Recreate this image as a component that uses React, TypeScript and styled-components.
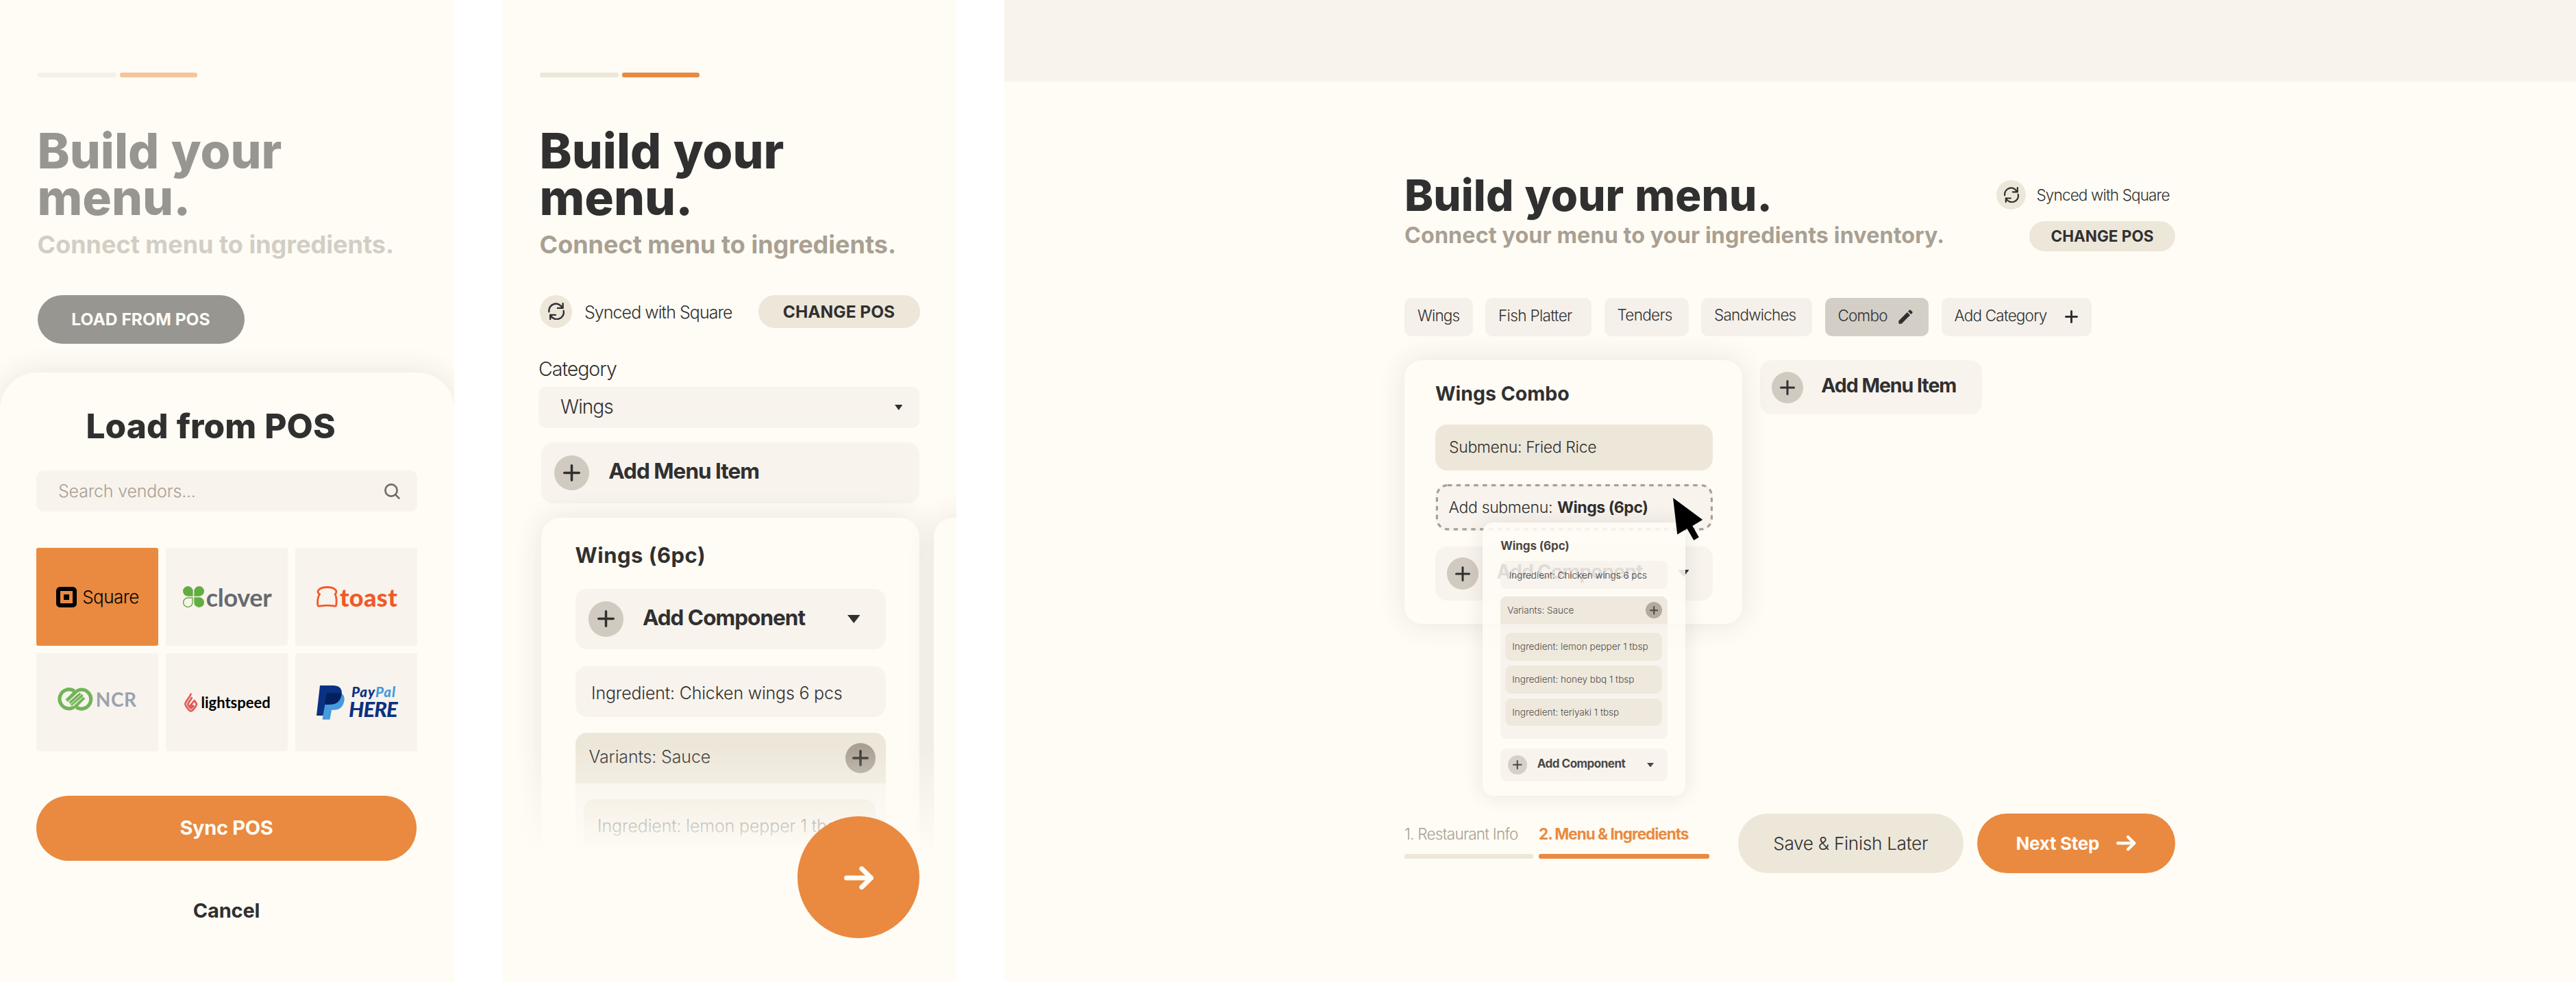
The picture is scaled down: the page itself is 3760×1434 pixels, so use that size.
import React from 'react';
import styled, { createGlobalStyle } from 'styled-components';

const c = {
  page: '#fffcf5',
  ink: '#303030',
  muted: '#a9a093',
  faint: '#f8f3ed',
  sand: '#ede7da',
  stone: '#d1cac0',
  orange: '#e98a40',
};

const Global = createGlobalStyle`
  *, *::before, *::after { box-sizing: border-box; }
  body { margin: 0; background: #fff; }
  #root { font-family: Inter, "Liberation Sans", sans-serif; color: ${c.ink}; }
  svg { display: block; flex: none; }
`;

/* ---------- primitives ---------- */

const Text = styled.span<{ $size: number; $w?: number; $ls?: number; $color?: string; $lh?: number; $up?: number }>`
  display: block;
  flex: none;
  white-space: nowrap;
  font-size: ${p => p.$size}px;
  font-weight: ${p => p.$w ?? 300};
  letter-spacing: ${p => p.$ls ?? 0}px;
  color: ${p => p.$color ?? c.ink};
  line-height: ${p => (p.$lh ? `${p.$lh}px` : '1.2')};
  margin-bottom: ${p => (p.$up ?? 0) * 2}px;
`;

const Board = styled.div`
  width: 3760px;
  height: 1434px;
  display: grid;
  grid-template-columns: 662.5px 662.5px 1fr;
  column-gap: 70.5px;
  overflow: hidden;
`;

const Phone = styled.section`
  position: relative;
  height: 1434px;
  background: ${c.page};
  overflow: hidden;
  display: flex;
  flex-direction: column;
  padding-top: 106px;
`;

const Intro = styled.header`
  padding-left: 54.5px;
`;

const Bars = styled.div`
  display: flex;
  gap: 5.5px;
`;

const Bar = styled.i<{ $w: number; $bg: string }>`
  display: block;
  width: ${p => p.$w}px;
  height: 7px;
  border-radius: 3px;
  background: ${p => p.$bg};
`;

const PhoneTitle = styled.h1<{ $color: string }>`
  margin: 73px 0 0;
  font-size: 71px;
  line-height: 68px;
  font-weight: 800;
  letter-spacing: 0;
  word-spacing: 2px;
  color: ${p => p.$color};
`;

const PhoneSub = styled.p<{ $color: string }>`
  margin: 15px 0 0;
  font-size: 36px;
  line-height: 40px;
  font-weight: 700;
  white-space: nowrap;
  color: ${p => p.$color};
`;

const Pill = styled.button<{ $w: number; $h: number; $bg: string; $gap?: number; $mt?: number; $ml?: number }>`
  display: flex;
  align-items: center;
  justify-content: center;
  flex: none;
  gap: ${p => p.$gap ?? 0}px;
  width: ${p => p.$w}px;
  height: ${p => p.$h}px;
  margin: ${p => p.$mt ?? 0}px 0 0 ${p => p.$ml ?? 0}px;
  padding: 0;
  border: 0;
  border-radius: ${p => p.$h / 2}px;
  background: ${p => p.$bg};
  font-family: inherit;
`;

const Disc = styled.span<{ $d: number; $bg?: string }>`
  display: flex;
  align-items: center;
  justify-content: center;
  flex: none;
  width: ${p => p.$d}px;
  height: ${p => p.$d}px;
  border-radius: 50%;
  background: ${p => p.$bg ?? c.stone};
`;

/* ---------- icons ---------- */

const Plus = ({ size, stroke }: { size: number; stroke: number }) => (
  <svg width={size} height={size} viewBox={`0 0 ${size} ${size}`} stroke={c.ink} strokeWidth={stroke} strokeLinecap="round">
    <path d={`M${size / 2} ${stroke / 2}V${size - stroke / 2}M${stroke / 2} ${size / 2}H${size - stroke / 2}`} />
  </svg>
);

const Caret = ({ w, h }: { w: number; h: number }) => (
  <svg width={w} height={h} viewBox="0 0 10 8" preserveAspectRatio="none" fill={c.ink}>
    <path d="M0 0H10L5 8Z" />
  </svg>
);

const Refresh = ({ size }: { size: number }) => (
  <svg width={size} height={size} viewBox="0 0 24 24" fill="none" stroke={c.ink} strokeWidth="2.3" strokeLinecap="round" strokeLinejoin="round">
    <path d="M2.3 12.7A9.7 9.7 0 0 1 20.8 7.4M21.7 1.2V7.6H14.4M22.7 11.4A9.7 9.7 0 0 1 4.2 17M4 23V17.2H11.4" />
  </svg>
);

const Arrow = ({ w, h, stroke }: { w: number; h: number; stroke: number }) => {
  const s = stroke / 2;
  return (
    <svg width={w} height={h} viewBox={`0 0 ${w} ${h}`} fill="none" stroke={c.page} strokeWidth={stroke} strokeLinecap="round" strokeLinejoin="round">
      <path d={`M${s} ${h / 2}H${w - s}M${w * 0.6} ${s}L${w - s} ${h / 2}L${w * 0.6} ${h - s}`} />
    </svg>
  );
};

const SearchIcon = () => (
  <svg width="23" height="23" viewBox="0 0 23 23" fill="none" stroke="#6f6a5d" strokeWidth="2.6" strokeLinecap="round">
    <circle cx="10" cy="10" r="8.6" />
    <path d="M16.4 16.6L21.5 21.6" />
  </svg>
);

const Pencil = () => (
  <svg width="27" height="27" viewBox="0 0 24 24" fill={c.ink}>
    <path d="M3 17.25V21h3.75L17.81 9.94l-3.75-3.75L3 17.25zM20.71 7.04a1 1 0 0 0 0-1.41l-2.34-2.34a1 1 0 0 0-1.41 0l-1.83 1.83 3.75 3.75 1.83-1.83z" />
  </svg>
);

const Pointer = styled.svg`
  position: absolute;
  left: 392px;
  top: 201.5px;
`;

/* ---------- vendor logos ---------- */

const SquareMark = () => (
  <svg width="30" height="30" viewBox="0 0 30 30">
    <rect x="3" y="3" width="24" height="24" rx="2.6" fill="none" stroke="#000" strokeWidth="6" />
    <rect x="11" y="11" width="8" height="8" rx=".6" />
  </svg>
);

const CloverMark = () => (
  <svg width="31" height="31" viewBox="0 0 31 31" fill="#62ad42">
    <path d="M14.7 14.7H7.3A7.35 7.35 0 1 1 14.7 7.3Z" />
    <path d="M16.3 14.7H23.7A7.35 7.35 0 1 0 16.3 7.3Z" />
    <path d="M16.3 16.3H23.7A7.35 7.35 0 1 1 16.3 23.7Z" />
    <path d="M14 17H7.3A6.7 6.7 0 1 0 14 23.7Z" fill="none" stroke="#62ad42" strokeWidth="1.4" />
  </svg>
);

const ToastMark = () => (
  <svg width="31" height="31" viewBox="0 0 31 31" fill="none" stroke="#f05a28" strokeWidth="2.8" strokeLinejoin="round">
    <path d="M4.6 11.4C1.6 10 1.3 7.6 3.2 5.4C5.8 2.5 10 1.5 15.5 1.5S25.2 2.5 27.8 5.4C29.5 7.6 29.2 10 27.2 11.3C29 15.5 29.6 22 28.6 28C28.3 29.4 27.3 29.3 25.5 28.9C19 27.9 12 27.9 5.8 28.9C3.5 29.4 2 29.3 1.8 27.5C1.2 21.5 2 15.5 4.6 11.4Z" />
  </svg>
);

const NcrMark = () => (
  <svg width="52" height="34" viewBox="0 0 52 34" fill="none" stroke="#71b458">
    <path strokeWidth="5.2" d="M24.5 5A14 14 0 1 0 16.7 30.8C21 30.8 24 29 27 26L38.5 14.5" />
    <path strokeWidth="5.2" d="M27.5 29A14 14 0 1 0 35.2 3C31 3 28 4.8 25 7.8L13.4 19.3" />
    <path strokeWidth="3.6" d="M17.5 22.5L33.5 8.5M19.5 25.5L36.5 10.5" />
    <path stroke="#f8f3ed" strokeWidth="1" d="M15.5 20.5L31.5 6.5M19 24.3L35 9.7M22.5 27.5L39.5 12" />
  </svg>
);

const LightspeedMark = () => (
  <svg width="19.5" height="29" viewBox="0 0 19.5 29" fill="none" stroke="#e05a58" strokeWidth="2.7" strokeLinejoin="round">
    <path d="M9.7 1.5C9.5 6 1.5 13 1.4 17C1.4 19 6.5 26.8 9.7 27.4C13 26.8 18 19 18 17L14.7 12L8.6 19.6L9.7 21.5L12.5 18.3" />
    <path d="M11.2 7C10 11 5.3 15 5.3 17.3C5.3 18.5 8 22.8 9.7 23.4C11 23 12.5 21.2 14 19" />
  </svg>
);

const PayPalMark = () => (
  <svg width="41" height="50" viewBox="0 0 41 50">
    <path fill="#459bdb" d="M36 11C40 14 41.3 18 40.5 22C39 31 34 35.8 25 35.8H22L19.5 49.8H8.7L11.5 27H20Z" />
    <path fill="#0a3182" d="M5 0H24C33 0 37.5 4.5 36.8 11.5L20 27.7H12.3L9.5 44H0Z" />
    <path fill="#04205f" d="M14.7 11.2H36.8C36 22 30 27.7 20 27.7H12Z" />
  </svg>
);

const Brand = styled.span<{ $size: number; $w: number; $color: string; $ls?: number; $italic?: boolean; $inter?: boolean; $ml?: number }>`
  display: block;
  white-space: nowrap;
  font-family: ${p => (p.$inter ? 'Inter' : 'Lato')}, "Open Sans", sans-serif;
  font-size: ${p => p.$size}px;
  font-weight: ${p => p.$w};
  font-style: ${p => (p.$italic ? 'italic' : 'normal')};
  letter-spacing: ${p => p.$ls ?? 0}px;
  line-height: 1;
  color: ${p => p.$color};
  margin-left: ${p => p.$ml ?? 0}px;
`;

const Sky = styled.span`
  color: #459bdb;
`;

const Tiles = styled.div`
  display: grid;
  grid-template-columns: repeat(3, 178px);
  grid-auto-rows: 143px;
  gap: 11px;
  margin-top: 53px;
`;

const Tile = styled.div<{ $pad: number; $gap: number; $active?: boolean; $lift?: number }>`
  display: flex;
  align-items: center;
  gap: ${p => p.$gap}px;
  padding-left: ${p => p.$pad}px;
  padding-bottom: ${p => p.$lift ?? 0}px;
  border-radius: 3px;
  background: ${p => (p.$active ? c.orange : c.faint)};
`;

const PayPalWords = styled.div`
  display: flex;
  flex-direction: column;
`;

/* ---------- phone: vendor sheet ---------- */

const Sheet = styled.div`
  flex: 1;
  margin-top: 42px;
  padding: 48px 53px 0;
  border-radius: 54px 54px 0 0;
  background: ${c.page};
  box-shadow: 0 0 42px rgba(60, 50, 40, 0.11);
`;

const SheetTitle = styled.h2`
  margin: 0;
  padding-left: 72.5px;
  font-size: 49.5px;
  line-height: 60px;
  font-weight: 800;
  letter-spacing: 0.1px;
  word-spacing: 1px;
  white-space: nowrap;
`;

const Field = styled.div<{ $mt: number }>`
  display: flex;
  align-items: center;
  justify-content: space-between;
  height: 60px;
  width: 556px;
  margin-top: ${p => p.$mt}px;
  padding: 0 25px 0 32px;
  border-radius: 10px;
  background: ${c.faint};
`;

const SheetActions = styled.div`
  display: flex;
  flex-direction: column;
  align-items: center;
  width: 555px;
  margin-top: 65px;
  gap: 52.5px;
`;

const VendorPhone = () => (
  <Phone>
    <Intro>
      <Bars>
        <Bar $w={115} $bg="#f5f0e9" />
        <Bar $w={113} $bg="#f5c49c" />
      </Bars>
      <PhoneTitle $color="#979690">Build your<br />menu.</PhoneTitle>
      <PhoneSub $color="#d3cec5">Connect menu to ingredients.</PhoneSub>
      <Pill $w={302} $h={71} $bg="#979690" $mt={54}>
        <Text $size={24.6} $w={700} $color={c.page}>LOAD FROM POS</Text>
      </Pill>
    </Intro>
    <Sheet>
      <SheetTitle>Load from POS</SheetTitle>
      <Field $mt={35}>
        <Text $size={25} $ls={-0.2} $color={c.muted}>Search vendors...</Text>
        <SearchIcon />
      </Field>
      <Tiles>
        <Tile $active $pad={28.7} $gap={8.5}>
          <SquareMark />
          <Brand $inter $size={26} $w={300} $ls={-0.5} $color="#000">Square</Brand>
        </Tile>
        <Tile $pad={24.7} $gap={3}>
          <CloverMark />
          <Brand $size={36} $w={700} $ls={-0.3} $color="#666a70">clover</Brand>
        </Tile>
        <Tile $pad={30.5} $gap={3.5}>
          <ToastMark />
          <Brand $size={36} $w={900} $ls={0.4} $color="#f05a28">toast</Brand>
        </Tile>
        <Tile $pad={31.3} $gap={3.5} $lift={9}>
          <NcrMark />
          <Brand $size={28} $w={700} $ls={0.6} $color="#98a3ae">NCR</Brand>
        </Tile>
        <Tile $pad={27} $gap={5}>
          <LightspeedMark />
          <Brand $size={22} $w={700} $color="#000">lightspeed</Brand>
        </Tile>
        <Tile $pad={31} $gap={6}>
          <PayPalMark />
          <PayPalWords>
            <Brand $size={20.5} $w={900} $italic $ls={0.9} $ml={4} $color="#0a3182">Pay<Sky>Pal</Sky></Brand>
            <Brand $size={31} $w={900} $italic $ls={-0.9} $color="#0a3182">HERE</Brand>
          </PayPalWords>
        </Tile>
      </Tiles>
      <SheetActions>
        <Pill $w={555} $h={95} $bg={c.orange}>
          <Text $size={29} $w={700} $ls={-0.3} $color={c.page}>Sync POS</Text>
        </Pill>
        <Text $size={29} $w={700} $ls={-0.2} $lh={40}>Cancel</Text>
      </SheetActions>
    </Sheet>
  </Phone>
);

/* ---------- menu cards ---------- */

const AddRow = styled.div<{ $h: number; $w?: number; $pad: number; $end?: number; $gap: number; $r?: number; $mt?: number; $ml?: number }>`
  display: flex;
  align-items: center;
  gap: ${p => p.$gap}px;
  flex: none;
  height: ${p => p.$h}px;
  width: ${p => (p.$w ? `${p.$w}px` : 'auto')};
  margin: ${p => p.$mt ?? 0}px 0 0 ${p => p.$ml ?? 0}px;
  padding: 0 ${p => p.$end ?? p.$pad}px 0 ${p => p.$pad}px;
  border-radius: ${p => p.$r ?? 17}px;
  background: ${c.faint};

  > svg { margin-left: auto; }
`;

const Line = styled.div<{ $h: number; $pad: number; $end?: number; $r: number; $bg?: string; $mt?: number }>`
  display: flex;
  align-items: center;
  justify-content: space-between;
  height: ${p => p.$h}px;
  margin-top: ${p => p.$mt ?? 0}px;
  padding: 0 ${p => p.$end ?? p.$pad}px 0 ${p => p.$pad}px;
  border-radius: ${p => p.$r}px;
  background: ${p => p.$bg ?? c.faint};
`;

const Group = styled.div<{ $r: number; $mt: number }>`
  margin-top: ${p => p.$mt}px;
  border-radius: ${p => p.$r}px;
  overflow: hidden;
  background: ${c.faint};
`;

/* ---------- phone: menu builder ---------- */

const SyncRow = styled.div`
  display: flex;
  align-items: center;
  height: 47.5px;
  width: 555px;
  margin-top: 54px;
  gap: 18px;

  > button { margin-left: auto; }
`;

const Builder = styled.div`
  display: flex;
  flex-direction: column;
  padding: 0 53.5px 0 53px;
  margin-top: 45px;
`;

const Carousel = styled.div`
  display: flex;
  gap: 21px;
  margin: 21.4px 0 0 56.6px;
  height: 678px;
`;

const PhoneCard = styled.article`
  flex: none;
  width: 552.4px;
  height: 800px;
  padding: 35.5px 48.5px 0 50px;
  border-radius: 28px;
  background: ${c.page};
  box-shadow: 0 0 42px rgba(60, 50, 40, 0.11);
  display: flex;
  flex-direction: column;
`;

const VariantBody = styled.div`
  padding: 23px 15.5px 40px 12px;
  display: flex;
  flex-direction: column;
  gap: 23px;
`;

const Fade = styled.div`
  position: absolute;
  left: 0;
  right: 0;
  top: 1090px;
  bottom: 0;
  background: linear-gradient(rgba(255, 252, 245, 0), ${c.page} 158px);
`;

const Fab = styled.button`
  position: absolute;
  left: 430.5px;
  top: 1191.7px;
  width: 178.6px;
  height: 178.6px;
  padding: 2px 0 0 1px;
  border: 0;
  border-radius: 50%;
  background: ${c.orange};
  display: flex;
  align-items: center;
  justify-content: center;
`;

const BuilderPhone = () => (
  <Phone>
    <Intro>
      <Bars>
        <Bar $w={115} $bg={c.sand} />
        <Bar $w={113} $bg={c.orange} />
      </Bars>
      <PhoneTitle $color={c.ink}>Build your<br />menu.</PhoneTitle>
      <PhoneSub $color={c.muted}>Connect menu to ingredients.</PhoneSub>
      <SyncRow>
        <Disc $d={47.5} $bg={c.sand}><Refresh size={25} /></Disc>
        <Text $size={25} $ls={-0.95} $up={-1}>Synced with Square</Text>
        <Pill $w={236} $h={47.5} $bg={c.sand}>
          <Text $size={24.5} $w={700} $up={-1}>CHANGE POS</Text>
        </Pill>
      </SyncRow>
    </Intro>
    <Builder>
      <Text $size={28.5} $ls={-1} $lh={30}>Category</Text>
      <Field $mt={11.5}>
        <Text $size={28} $ls={-0.9} $up={0.5}>Wings</Text>
        <Caret w={11.5} h={8} />
      </Field>
      <AddRow $h={88.5} $pad={19} $gap={28.5} $mt={21} $ml={3.5}>
        <Disc $d={51.3}><Plus size={25} stroke={3.5} /></Disc>
        <Text $size={31.5} $w={700} $ls={-1} $up={2}>Add Menu Item</Text>
      </AddRow>
    </Builder>
    <Carousel>
      <PhoneCard>
        <Text $size={31} $w={700} $ls={0.5} $lh={40}>Wings (6pc)</Text>
        <AddRow $h={88} $pad={19} $end={38} $gap={28} $mt={28.5}>
          <Disc $d={51.3}><Plus size={25} stroke={3.5} /></Disc>
          <Text $size={31.5} $w={700} $ls={-1} $up={2}>Add Component</Text>
          <Caret w={18.5} h={12} />
        </AddRow>
        <Line $h={74} $pad={23.5} $r={17} $mt={25}>
          <Text $size={25} $ls={-0.2} $up={-2}>Ingredient: Chicken wings 6 pcs</Text>
        </Line>
        <Group $r={17} $mt={23}>
          <Line $h={74} $pad={20} $end={15} $r={0} $bg={c.sand}>
            <Text $size={25} $ls={-0.15} $up={2}>Variants: Sauce</Text>
            <Disc $d={44} $bg={c.muted}><Plus size={24} stroke={3.5} /></Disc>
          </Line>
          <VariantBody>
            <Line $h={73} $pad={20.5} $r={17} $bg={c.sand}>
              <Text $size={25} $ls={-0.15} $up={-3}>Ingredient: lemon pepper 1 tbsp</Text>
            </Line>
          </VariantBody>
        </Group>
      </PhoneCard>
      <PhoneCard />
    </Carousel>
    <Fade />
    <Fab aria-label="Next"><Arrow w={43} h={34} stroke={7} /></Fab>
  </Phone>
);

/* ---------- desktop ---------- */

const Desktop = styled.section`
  height: 1434px;
  background: ${c.page};
`;

const TopBand = styled.div`
  height: 119px;
  background: ${c.faint};
`;

const Main = styled.main`
  width: 1125px;
  margin-left: 584px;
  padding-top: 135.5px;
`;

const DeskHeader = styled.header`
  display: flex;
  justify-content: space-between;
  height: 112.2px;
`;

const DeskTitle = styled.h1`
  margin: 0;
  font-size: 63.5px;
  line-height: 60px;
  font-weight: 800;
  letter-spacing: 0.1px;
  word-spacing: 2px;
  white-space: nowrap;
`;

const DeskSub = styled.p`
  margin: 11.5px 0 0;
  font-size: 32.3px;
  line-height: 36px;
  font-weight: 700;
  letter-spacing: 0.1px;
  color: ${c.muted};
  white-space: nowrap;
`;

const SyncColumn = styled.div`
  display: flex;
  flex-direction: column;
  align-items: flex-end;
  padding-top: 8.2px;
  gap: 17.3px;
`;

const SyncState = styled.div`
  display: flex;
  align-items: center;
  gap: 15.5px;
  width: 261px;
`;

const Chips = styled.nav`
  display: flex;
  gap: 18.5px;
  margin-top: 68.3px;
`;

const Chip = styled.div<{ $w: number; $active?: boolean }>`
  display: flex;
  align-items: center;
  justify-content: space-between;
  flex: none;
  width: ${p => p.$w}px;
  height: 55.8px;
  padding: 0 20px 0 19px;
  border-radius: 10px;
  background: ${p => (p.$active ? '#d3cec6' : '#f5f0ea')};
`;

const Cards = styled.div`
  display: flex;
  align-items: flex-start;
  gap: 26px;
  height: 662.3px;
  margin-top: 35.2px;
`;

const ComboCard = styled.article`
  position: relative;
  flex: none;
  width: 493px;
  height: 385.3px;
  padding: 32.3px 43px 0 45px;
  border-radius: 25px;
  background: ${c.page};
  box-shadow: 0 0 42px rgba(60, 50, 40, 0.11);
  display: flex;
  flex-direction: column;
`;

const DropTarget = styled.div`
  position: relative;
  display: flex;
  align-items: center;
  gap: 7px;
  height: 67.4px;
  margin-top: 20.5px;
  padding-left: 19.5px;
  border-radius: 17px;
  background: ${c.faint};
`;

const DashOutline = styled.svg`
  position: absolute;
  inset: 0;
`;

const DragCard = styled.article`
  position: absolute;
  left: 113.5px;
  top: 237px;
  width: 296.5px;
  height: 399px;
  padding: 22px 26px 0 26.8px;
  border-radius: 15px;
  background: ${c.page};
  box-shadow: 0 0 28px rgba(60, 50, 40, 0.12);
  opacity: 0.88;
`;

const DragVariants = styled.div`
  padding: 13px 8.5px 18.5px 7px;
  display: flex;
  flex-direction: column;
  gap: 7.5px;
`;

const Footer = styled.footer`
  display: flex;
  height: 86.4px;
`;

const Steps = styled.div`
  display: flex;
  gap: 8.5px;
  width: 486.6px;
  padding-top: 14.7px;
`;

const Step = styled.div`
  display: flex;
  flex-direction: column;
  gap: 14px;
`;

const sauces = ['Ingredient: lemon pepper 1 tbsp', 'Ingredient: honey bbq 1 tbsp', 'Ingredient: teriyaki 1 tbsp'];

const DesktopView = () => (
  <Desktop>
    <TopBand />
    <Main>
      <DeskHeader>
        <div>
          <DeskTitle>Build your menu.</DeskTitle>
          <DeskSub>Connect your menu to your ingredients inventory.</DeskSub>
        </div>
        <SyncColumn>
          <SyncState>
            <Disc $d={43} $bg={c.sand}><Refresh size={23} /></Disc>
            <Text $size={22.5} $ls={-0.85}>Synced with Square</Text>
          </SyncState>
          <Pill $w={213} $h={43.7} $bg={c.sand}>
            <Text $size={22.5} $w={700}>CHANGE POS</Text>
          </Pill>
        </SyncColumn>
      </DeskHeader>
      <Chips>
        <Chip $w={99.5}><Text $size={22.5} $ls={-0.8} $up={2}>Wings</Text></Chip>
        <Chip $w={155}><Text $size={22.5} $ls={-0.65} $up={2}>Fish Platter</Text></Chip>
        <Chip $w={123}><Text $size={22.5} $ls={-0.7} $up={3}>Tenders</Text></Chip>
        <Chip $w={162}><Text $size={22.5} $ls={-0.8} $up={3}>Sandwiches</Text></Chip>
        <Chip $w={151.5} $active><Text $size={22.5} $ls={-0.8} $up={2}>Combo</Text><Pencil /></Chip>
        <Chip $w={219}><Text $size={22.5} $ls={-0.8} $up={2}>Add Category</Text><Plus size={19} stroke={3} /></Chip>
      </Chips>
      <Cards>
        <ComboCard>
          <Text $size={28.5} $w={700} $lh={34}>Wings Combo</Text>
          <Line $h={67.4} $pad={20} $r={17} $bg={c.sand} $mt={27.3}>
            <Text $size={23} $ls={-0.35} $up={-1}>Submenu: Fried Rice</Text>
          </Line>
          <DropTarget>
            <DashOutline width="405" height="67.4" fill="none" stroke={c.muted} strokeWidth="3.2" strokeDasharray="6.4 6.4">
              <rect x="2.4" y="1.6" width="401" height="64.2" rx="15.5" />
            </DashOutline>
            <Text $size={23} $ls={-0.35} $up={-0.5}>Add submenu:</Text>
            <Text $size={23} $w={700} $ls={-0.45} $up={-0.5}>Wings (6pc)</Text>
          </DropTarget>
          <AddRow $h={79.6} $pad={17} $end={35} $gap={26} $mt={23}>
            <Disc $d={46.3}><Plus size={22} stroke={3} /></Disc>
            <Text $size={28.5} $w={700} $ls={-1} $up={3}>Add Component</Text>
            <Caret w={16.5} h={10.5} />
          </AddRow>
          <DragCard>
            <Text $size={17} $w={700} $ls={-0.1} $lh={25}>Wings (6pc)</Text>
            <Line $h={40.3} $pad={12.5} $r={9} $mt={9.5}>
              <Text $size={13.5}>Ingredient: Chicken wings 6 pcs</Text>
            </Line>
            <Group $r={9} $mt={11.5}>
              <Line $h={40} $pad={10} $end={8} $r={0} $bg={c.sand}>
                <Text $size={13.5}>Variants: Sauce</Text>
                <Disc $d={24} $bg={c.muted}><Plus size={12.5} stroke={2} /></Disc>
              </Line>
              <DragVariants>
                {sauces.map(s => (
                  <Line key={s} $h={40.4} $pad={10} $r={9} $bg={c.sand}>
                    <Text $size={13.5}>{s}</Text>
                  </Line>
                ))}
              </DragVariants>
            </Group>
            <AddRow $h={48} $pad={10.5} $end={20.5} $gap={15} $r={9} $mt={14}>
              <Disc $d={28}><Plus size={13.5} stroke={2} /></Disc>
              <Text $size={17} $w={700} $ls={-0.5} $up={2}>Add Component</Text>
              <Caret w={10} h={6.5} />
            </AddRow>
          </DragCard>
          <Pointer width="45" height="63" viewBox="0 0 45 63">
            <path d="M0 0L43.2 32L28.4 41L37.8 57.5L30.3 62L20.5 45L6.2 53.5Z" />
          </Pointer>
        </ComboCard>
        <AddRow $h={79.4} $w={324} $pad={17} $gap={26}>
          <Disc $d={46.3}><Plus size={22} stroke={3} /></Disc>
          <Text $size={28.5} $w={700} $ls={-1.05} $up={3}>Add Menu Item</Text>
        </AddRow>
      </Cards>
      <Footer>
        <Steps>
          <Step>
            <Text $size={22.5} $ls={-0.75} $lh={30} $color={c.muted}>1. Restaurant Info</Text>
            <Bar $w={187.5} $bg={c.sand} />
          </Step>
          <Step>
            <Text $size={22.5} $w={700} $ls={-1} $lh={30} $color={c.orange}>2. Menu &amp; Ingredients</Text>
            <Bar $w={248.5} $bg={c.orange} />
          </Step>
        </Steps>
        <Pill $w={329} $h={86.4} $bg={c.sand}>
          <Text $size={26.2} $ls={-0.3}>Save &amp; Finish Later</Text>
        </Pill>
        <Pill $w={289.4} $h={86.4} $bg={c.orange} $ml={20} $gap={25.5}>
          <Text $size={26} $w={700} $ls={-0.3} $color={c.page}>Next Step</Text>
          <Arrow w={28.5} h={22.5} stroke={4.5} />
        </Pill>
      </Footer>
    </Main>
  </Desktop>
);

export default function App() {
  return (
    <>
      <Global />
      <Board>
        <VendorPhone />
        <BuilderPhone />
        <DesktopView />
      </Board>
    </>
  );
}
